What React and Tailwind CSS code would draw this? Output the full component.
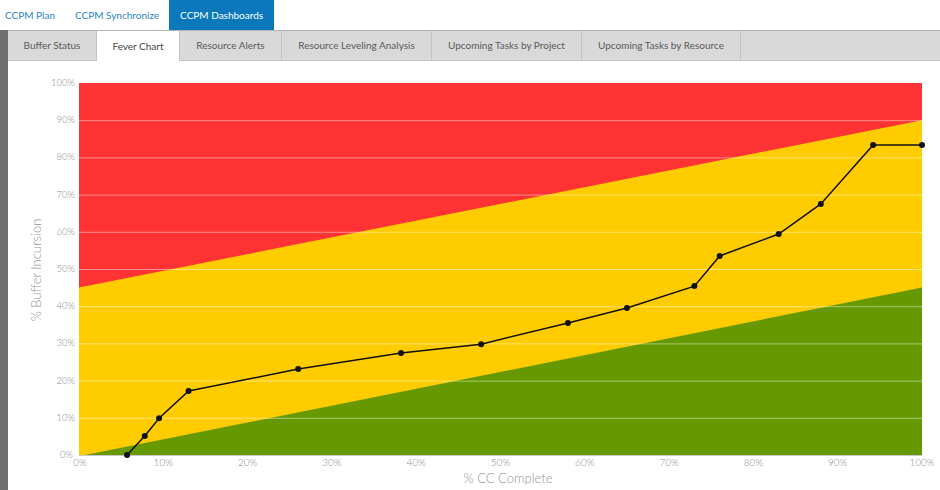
import React from "react";

const NAV = [
  { label: "CCPM Plan", active: false, first: true },
  { label: "CCPM Synchronize", active: false },
  { label: "CCPM Dashboards", active: true },
];

const TABS = [
  { label: "Buffer Status", w: "w-[89px]" },
  { label: "Fever Chart", w: "w-[83px]", active: true },
  { label: "Resource Alerts", w: "w-[102px]" },
  { label: "Resource Leveling Analysis", w: "w-[150px]" },
  { label: "Upcoming Tasks by Project", w: "w-[150px]" },
  { label: "Upcoming Tasks by Resource", w: "w-[159px]" },
];

const POINTS = [
  [5.7, 0],
  [7.8, 5.1],
  [9.5, 9.9],
  [13, 17.2],
  [26, 23.1],
  [38.2, 27.4],
  [47.7, 29.8],
  [58, 35.5],
  [65, 39.5],
  [73, 45.4],
  [76, 53.5],
  [83, 59.4],
  [88, 67.5],
  [94.2, 83.3],
  [100, 83.3],
];

const X0 = 71;
const W = 843;
const Y0 = 394;
const H = 372;
const px = (p) => X0 + (p * W) / 100;
const py = (p) => Y0 - (p * H) / 100;
const TICKS = [0, 10, 20, 30, 40, 50, 60, 70, 80, 90, 100];

function FeverChart() {
  const line = POINTS.map(([x, y]) => `${px(x)},${py(y)}`).join(" ");
  return (
    <svg width="932" height="429" className="block">
      <rect x={X0} y={py(100)} width={W} height={H} fill="#ffcc00" />
      <polygon
        points={`${px(0)},${py(100)} ${px(100)},${py(100)} ${px(100)},${py(90)} ${px(0)},${py(45)}`}
        fill="#ff3333"
      />
      <polygon
        points={`${px(0.7)},${py(0)} ${px(100)},${py(45)} ${px(100)},${py(0)}`}
        fill="#669900"
      />
      {TICKS.slice(1, 10).map((t) => (
        <line
          key={t}
          x1={X0}
          x2={X0 + W}
          y1={py(t) + 0.5}
          y2={py(t) + 0.5}
          stroke="#ffffff"
          strokeOpacity="0.45"
        />
      ))}
      <line x1={X0} x2={X0 + W} y1={Y0 + 0.5} y2={Y0 + 0.5} stroke="#c8c8c8" />

      {TICKS.map((t) => (
        <text
          key={"y" + t}
          x={t === 0 ? 65 : 67}
          y={py(t) + 3}
          textAnchor="end"
          fontSize="9.5"
          fill="#8c8c8c"
          fontFamily="Lato, sans-serif"
          fontWeight="300"
        >
          {t}%
        </text>
      ))}
      {TICKS.map((t) => (
        <text
          key={"x" + t}
          x={t === 0 ? px(t) + 1 : px(t)}
          y={405}
          textAnchor="middle"
          fontSize="10"
          fill="#8c8c8c"
          fontFamily="Lato, sans-serif"
          fontWeight="300"
        >
          {t}%
        </text>
      ))}

      <text
        x={30}
        y={209}
        transform="rotate(-90 30 209)"
        textAnchor="middle"
        dominantBaseline="middle"
        fontSize="13"
        fill="#959595"
        fontFamily="Lato, sans-serif"
        fontWeight="300"
      >
        % Buffer Incursion
      </text>
      <text
        x={500}
        y={422}
        textAnchor="middle"
        fontSize="13"
        fill="#959595"
        fontFamily="Lato, sans-serif"
        fontWeight="300"
      >
        % CC Complete
      </text>

      <polyline points={line} fill="none" stroke="#111" strokeWidth="1.5" />
      {POINTS.map(([x, y], i) => (
        <circle key={i} cx={px(x)} cy={py(y)} r="3" fill="#111" />
      ))}
    </svg>
  );
}

export default function App() {
  return (
    <div className="w-[940px] h-[490px] bg-white overflow-hidden font-['Lato',sans-serif] flex flex-col">
      <nav className="h-[30px] flex items-stretch">
        {NAV.map((n) => (
          <div
            key={n.label}
            className={
              n.active
                ? "bg-[#0a78bb] text-white px-[11px] flex items-center text-[10px]"
                : n.first
                ? "text-[#2a84c4] pl-[5px] pr-[10px] flex items-center text-[10px]"
                : "text-[#2a84c4] px-[10px] flex items-center text-[10px]"
            }
          >
            {n.label}
          </div>
        ))}
      </nav>
      <div className="flex flex-1">
        <div className="w-[8px] bg-[#6c6f6e]" />
        <div className="flex-1 flex flex-col">
          <div className="h-[31px] flex bg-[#d9d9d9] border-t border-[#b3b3b3]">
            {TABS.map((t) => (
              <div
                key={t.label}
                className={
                  t.active
                    ? `${t.w} bg-white text-[#444] text-[10px] flex items-center justify-center border-r border-[#c4c4c4]`
                    : `${t.w} text-[#5a5a5a] text-[10px] flex items-center justify-center border-r border-b border-[#c4c4c4]`
                }
              >
                {t.label}
              </div>
            ))}
            <div className="flex-1 border-b border-[#c4c4c4]" />
          </div>
          <div className="flex-1">
            <FeverChart />
          </div>
        </div>
      </div>
    </div>
  );
}
